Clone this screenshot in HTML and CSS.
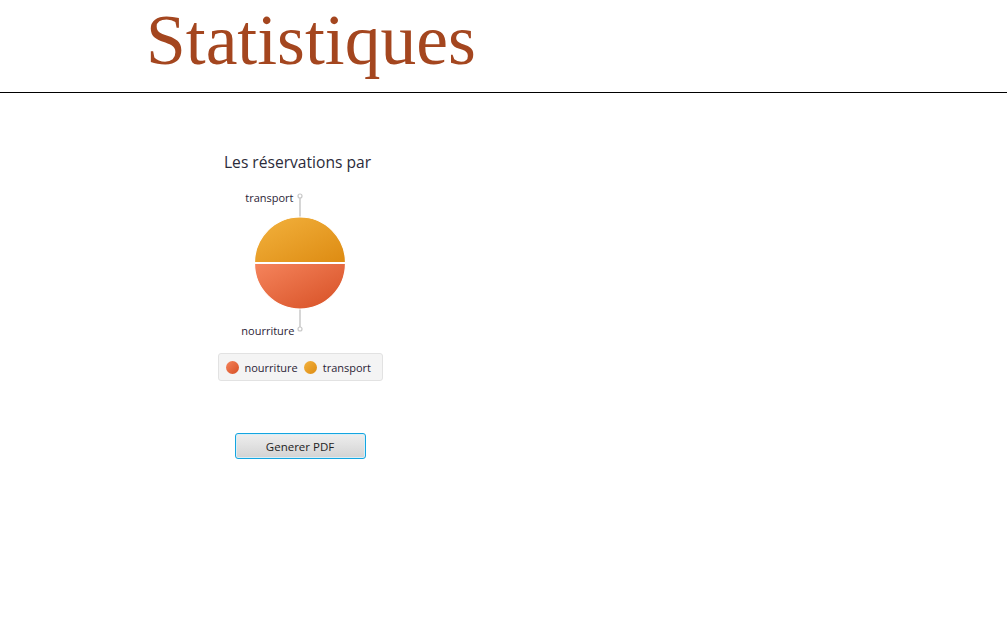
FILE: index.html
```html
<!DOCTYPE html>
<html lang="fr">
<head>
<meta charset="utf-8">
<title>Statistiques</title>
<link rel="stylesheet" href="styles.css">
</head>
<body>
<header class="header">
  <h1 class="page-title">Statistiques</h1>
</header>
<main class="main">
  <section class="chart">
    <h2 class="chart-title">Les réservations par</h2>
    <svg class="pie" width="200" height="155" viewBox="0 0 200 155">
      <defs>
        <linearGradient id="gTransport" x1="0" y1="0" x2="1" y2="1">
          <stop offset="0" stop-color="#f3b23e"/>
          <stop offset="1" stop-color="#dd8b12"/>
        </linearGradient>
        <linearGradient id="gNourriture" x1="0" y1="0" x2="1" y2="1">
          <stop offset="0" stop-color="#f5845c"/>
          <stop offset="1" stop-color="#d64f24"/>
        </linearGradient>
      </defs>
      <line x1="100" y1="12" x2="100" y2="32" stroke="#d6d6d6" stroke-width="2"/>
      <circle cx="100" cy="11" r="2" fill="#fff" stroke="#c8c8c8" stroke-width="1.2"/>
      <line x1="100" y1="124" x2="100" y2="143" stroke="#d6d6d6" stroke-width="2"/>
      <circle cx="100" cy="144" r="2" fill="#fff" stroke="#c8c8c8" stroke-width="1.2"/>
      <path d="M54.5 77.5 A45.5 45.5 0 0 1 145.5 77.5 Z" fill="url(#gTransport)" stroke="#fff" stroke-width="1.2"/>
      <path d="M54.5 78.5 A45.5 45.5 0 0 0 145.5 78.5 Z" fill="url(#gNourriture)" stroke="#fff" stroke-width="1.2"/>
      <text class="pie-label" x="93.5" y="17" text-anchor="end">transport</text>
      <text class="pie-label" x="94.5" y="150" text-anchor="end">nourriture</text>
    </svg>
    <div class="legend">
      <span class="legend-item"><span class="dot dot-nourriture"></span>nourriture</span>
      <span class="legend-item"><span class="dot dot-transport"></span>transport</span>
    </div>
    <button class="btn" type="button">Generer PDF</button>
  </section>
</main>
</body>
</html>
```
FILE: styles.css
```css
html, body {
  margin: 0;
  padding: 0;
  background: #ffffff;
}
body {
  font-family: "Open Sans", "Noto Sans", sans-serif;
  color: #333333;
}
.header {
  height: 93px;
  border-bottom: 1px solid #000000;
  box-sizing: border-box;
  padding-left: 146px;
}
.page-title {
  margin: 0;
  padding-top: 4px;
  font-family: "Liberation Serif", "Times New Roman", serif;
  font-weight: normal;
  font-size: 71.5px;
  line-height: 72px;
  color: #a4461f;
}
.main {
  padding-left: 200px;
  padding-top: 58px;
}
.chart {
  width: 200px;
  display: flex;
  flex-direction: column;
  align-items: center;
}
.chart-title {
  margin: 0 0 0 -5px;
  font-size: 15.6px;
  font-weight: normal;
  line-height: 22px;
  color: #2b2b3a;
  letter-spacing: 0;
}
.pie {
  display: block;
  margin-top: 12px;
}
.pie-label {
  font-family: "Open Sans", "Noto Sans", sans-serif;
  font-size: 11px;
  fill: #2b2436;
}
.legend {
  margin-top: 13px;
  width: 165px;
  height: 28px;
  box-sizing: border-box;
  background: #f4f4f4;
  border: 1px solid #e2e2e2;
  border-radius: 3px;
  display: flex;
  align-items: center;
  gap: 6px;
  padding-left: 7px;
  font-size: 11px;
  color: #2b2436;
}
.legend-item {
  display: flex;
  align-items: center;
  gap: 6px;
}
.dot {
  width: 13px;
  height: 13px;
  border-radius: 50%;
  display: inline-block;
}
.dot-nourriture {
  background: linear-gradient(135deg, #f5845c, #d64f24);
}
.dot-transport {
  background: linear-gradient(135deg, #f3b23e, #dd8b12);
}
.btn {
  margin-top: 52px;
  width: 131px;
  height: 26px;
  box-sizing: border-box;
  border: 1px solid #14a5e0;
  border-radius: 3px;
  background: linear-gradient(#eeeeee, #d3d3d3);
  box-shadow: inset 0 0 0 1px #d8eef7;
  font-family: "Open Sans", "Noto Sans", sans-serif;
  font-size: 11.5px;
  color: #222222;
  padding: 0;
  cursor: pointer;
}
```
